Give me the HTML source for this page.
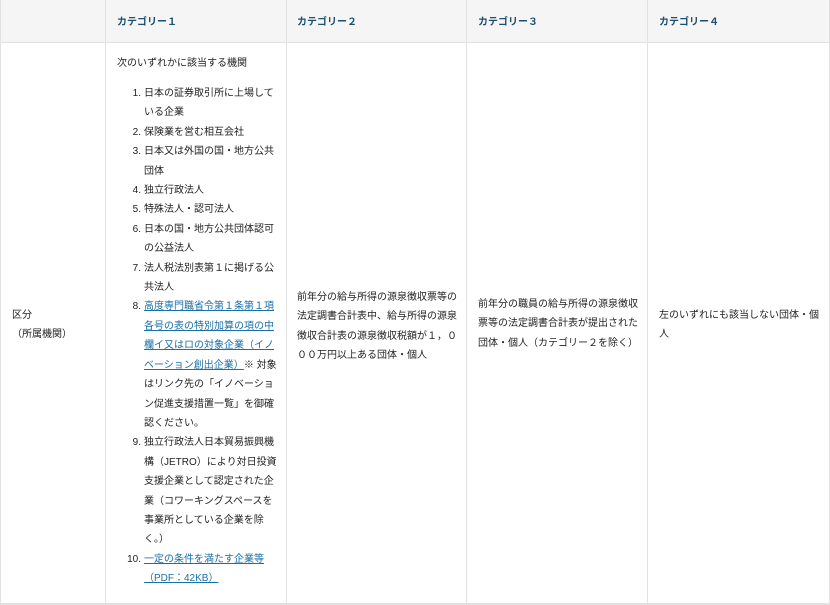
<!DOCTYPE html>
<html><head><meta charset="utf-8"><style>
*{margin:0;padding:0;box-sizing:border-box}
body{width:830px;height:605px;background:#fff;position:relative;overflow:hidden;font-family:"Liberation Sans","Noto Sans CJK JP",sans-serif;font-size:10px;color:#222}
.hd{position:absolute;left:0;top:0;width:830px;height:43px;background:#f5f5f5;border-bottom:1px solid #e2e2e2}
.vl{position:absolute;top:0;width:1px;height:605px;background:#e2e2e2}
.bt{position:absolute;left:0;top:603px;width:830px;height:2px;background:#e2e2e2}
.h{position:absolute;top:16px;color:#1d4f6e;font-weight:bold;font-size:10px;line-height:14px}
.b{position:absolute;line-height:19.4px;white-space:nowrap}
.n{display:inline-block;width:27px;text-align:right;padding-right:3px}
.i{padding-left:27px}
a{color:#1a6fa8;text-decoration:underline}
</style></head><body>
<div class="hd"></div>
<div class="vl" style="left:0"></div>
<div class="vl" style="left:105px"></div>
<div class="vl" style="left:286px"></div>
<div class="vl" style="left:466px"></div>
<div class="vl" style="left:647px"></div>
<div class="vl" style="left:829px"></div>
<div class="bt"></div>
<div class="h" style="left:117px">カテゴリー１</div>
<div class="h" style="left:297px">カテゴリー２</div>
<div class="h" style="left:478px">カテゴリー３</div>
<div class="h" style="left:659px">カテゴリー４</div>

<div class="b" style="left:12px;top:306px">区分<br>（所属機関）</div>

<div class="b" style="left:117px;top:54px">次のいずれかに該当する機関</div>
<div class="b" style="left:117px;top:84px">
<div><span class="n">1.</span>日本の証券取引所に上場して</div>
<div class="i">いる企業</div>
<div><span class="n">2.</span>保険業を営む相互会社</div>
<div><span class="n">3.</span>日本又は外国の国・地方公共</div>
<div class="i">団体</div>
<div><span class="n">4.</span>独立行政法人</div>
<div><span class="n">5.</span>特殊法人・認可法人</div>
<div><span class="n">6.</span>日本の国・地方公共団体認可</div>
<div class="i">の公益法人</div>
<div><span class="n">7.</span>法人税法別表第１に掲げる公</div>
<div class="i">共法人</div>
<div><span class="n">8.</span><a>高度専門職省令第１条第１項</a></div>
<div class="i"><a>各号の表の特別加算の項の中</a></div>
<div class="i"><a>欄イ又はロの対象企業（イノ</a></div>
<div class="i"><a>ベーション創出企業）</a>※ 対象</div>
<div class="i">はリンク先の「イノベーショ</div>
<div class="i">ン促進支援措置一覧」を御確</div>
<div class="i">認ください。</div>
<div><span class="n">9.</span>独立行政法人日本貿易振興機</div>
<div class="i">構（JETRO）により対日投資</div>
<div class="i">支援企業として認定された企</div>
<div class="i">業（コワーキングスペースを</div>
<div class="i">事業所としている企業を除</div>
<div class="i">く。）</div>
<div><span class="n">10.</span><a>一定の条件を満たす企業等</a></div>
<div class="i"><a>（PDF：42KB）</a></div>
</div>

<div class="b" style="left:297px;top:288px">前年分の給与所得の源泉徴収票等の<br>法定調書合計表中、給与所得の源泉<br>徴収合計表の源泉徴収税額が１，０<br>００万円以上ある団体・個人</div>
<div class="b" style="left:478px;top:295px">前年分の職員の給与所得の源泉徴収<br>票等の法定調書合計表が提出された<br>団体・個人（カテゴリー２を除く）</div>
<div class="b" style="left:659px;top:306px">左のいずれにも該当しない団体・個<br>人</div>
</body></html>
